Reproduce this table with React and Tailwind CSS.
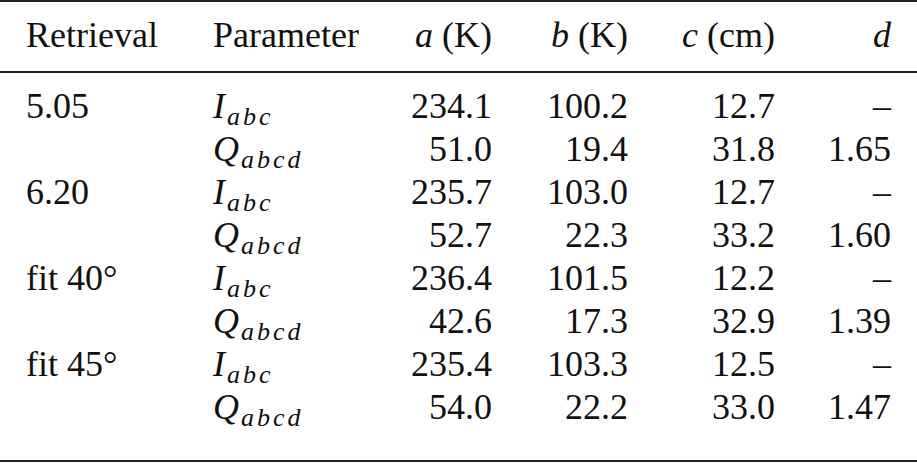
import React from "react";

const rows = [
  ["5.05", "I", "abc", "234.1", "100.2", "12.7", "–"],
  ["", "Q", "abcd", "51.0", "19.4", "31.8", "1.65"],
  ["6.20", "I", "abc", "235.7", "103.0", "12.7", "–"],
  ["", "Q", "abcd", "52.7", "22.3", "33.2", "1.60"],
  ["fit 40°", "I", "abc", "236.4", "101.5", "12.2", "–"],
  ["", "Q", "abcd", "42.6", "17.3", "32.9", "1.39"],
  ["fit 45°", "I", "abc", "235.4", "103.3", "12.5", "–"],
  ["", "Q", "abcd", "54.0", "22.2", "33.0", "1.47"],
];

function Sym({ base, sub }) {
  return (
    <span className="whitespace-nowrap">
      <i>{base}</i>
      <i className="ml-[2px] text-[26px] leading-none tracking-[3px] align-[-7px]">{sub}</i>
    </span>
  );
}

const grid = "grid grid-cols-[187px_198px_81px_136px_147px_116px] px-[26px] h-[43px] leading-[43px]";

export default function App() {
  return (
    <div className="w-[917px] h-[464px] bg-white text-[#111] [font-family:'Liberation_Serif','Times_New_Roman',serif] text-[36px]">
      <div className="h-[2px] bg-[#222]" />
      <div className="pt-[12px] pb-[14px]">
        <div className={grid}>
          <div>Retrieval</div>
          <div>Parameter</div>
          <div className="text-right whitespace-nowrap"><i>a</i> (K)</div>
          <div className="text-right whitespace-nowrap"><i>b</i> (K)</div>
          <div className="text-right whitespace-nowrap"><i>c</i> (cm)</div>
          <div className="text-right"><i>d</i></div>
        </div>
      </div>
      <div className="h-[2px] bg-[#222]" />
      <div className="pt-[12px] pb-[31px]">
        {rows.map((r, i) => (
          <div key={i} className={grid}>
            <div className="whitespace-nowrap">{r[0]}</div>
            <div><Sym base={r[1]} sub={r[2]} /></div>
            <div className="text-right">{r[3]}</div>
            <div className="text-right">{r[4]}</div>
            <div className="text-right">{r[5]}</div>
            <div className="text-right">{r[6]}</div>
          </div>
        ))}
      </div>
      <div className="h-[2px] bg-[#222]" />
    </div>
  );
}
